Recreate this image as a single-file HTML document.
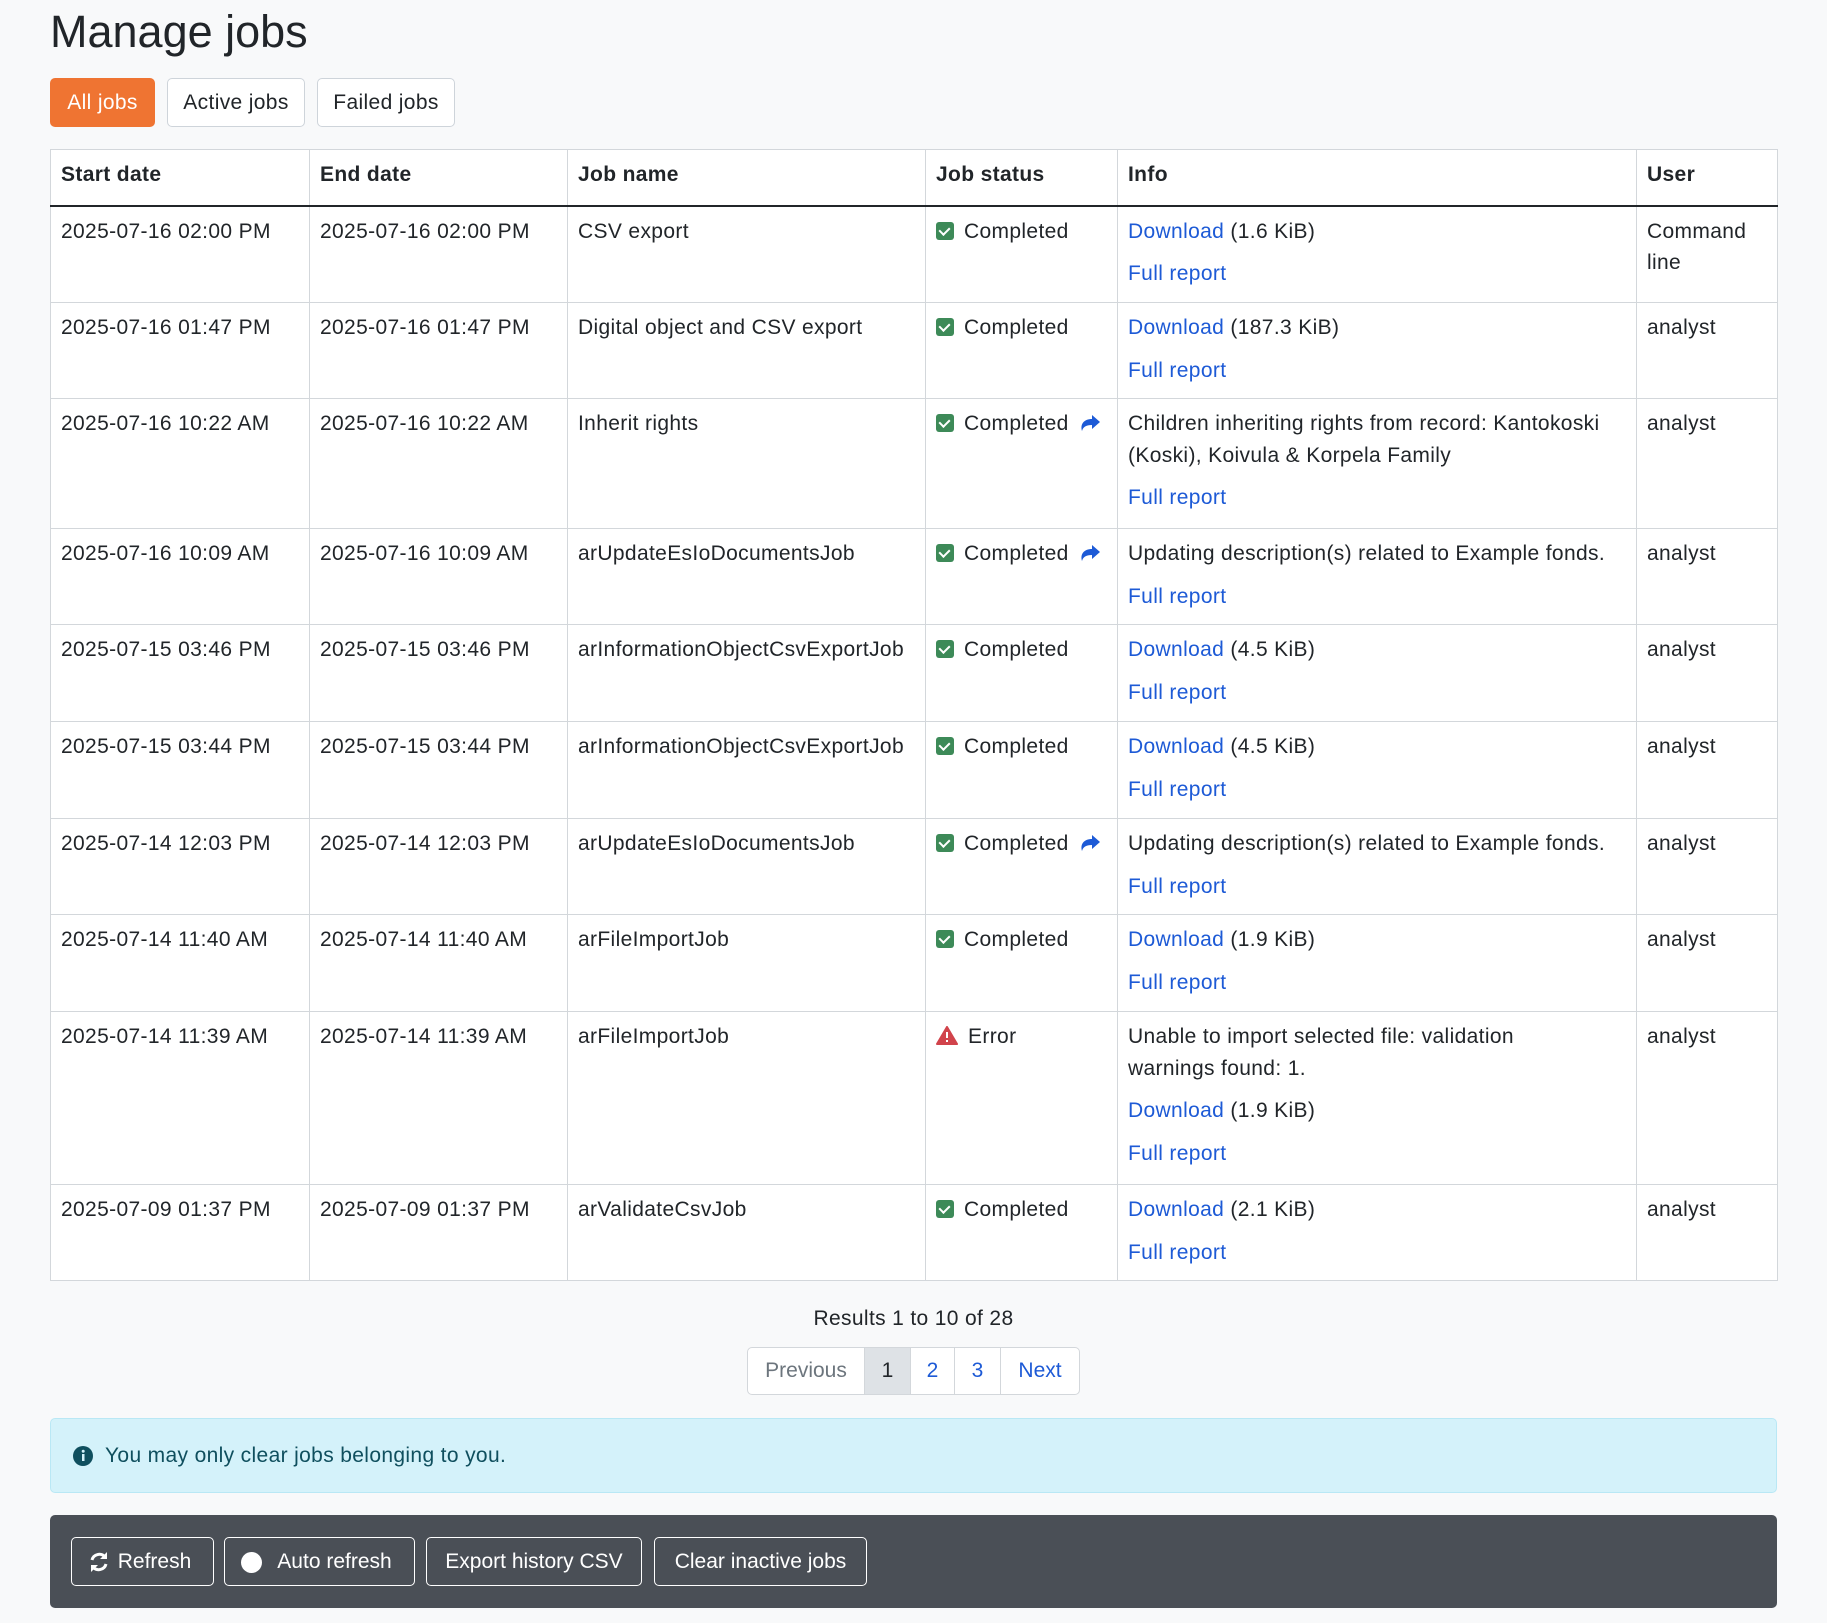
<!DOCTYPE html>
<html><head><meta charset="utf-8"><style>
*{box-sizing:border-box}
body{margin:0;background:#f8f9fa;font-family:"Liberation Sans",sans-serif;color:#212529;font-size:21px;letter-spacing:0.35px;width:1827px;height:1623px;overflow:hidden;position:relative}
h1{position:absolute;left:50px;top:4px;margin:0;font-weight:400;font-size:45px;line-height:56px;letter-spacing:0}
.tab{position:absolute;top:78px;height:49px;border:1px solid #ced4da;border-radius:5px;background:#fff;font-size:21px;line-height:47px;text-align:center}
table{position:absolute;left:50px;top:149px;width:1727px;border-collapse:collapse;background:#fff;table-layout:fixed}
td,th{border:1px solid #d3d7db;vertical-align:top;padding:9px 10px 0 10px;line-height:31.5px;text-align:left}
th{font-weight:700;height:56px;border-bottom:2px solid #212529}
a{color:#1d5ad6;text-decoration:none}
.fr{display:block;margin-top:11px}
.chk{display:inline-block;width:18px;height:18px;background:#3d8a58;border-radius:3px;vertical-align:-2px;margin-right:10px;position:relative}
.chk:after{content:"";position:absolute;left:5px;top:3px;width:5px;height:8px;border:solid #fff;border-width:0 2px 2px 0;transform:rotate(45deg)}
.arr{margin-left:10px;vertical-align:-2px}
.pg{position:absolute;top:1347px;height:48px;border:1px solid #d3d7db;background:#fff;line-height:46px;text-align:center;font-size:21px;color:#1d5ad6;letter-spacing:0}
.bb{position:absolute;top:1537px;height:49px;border:1px solid #fff;border-radius:5px;color:#fff;line-height:47px;text-align:center;font-size:21px;letter-spacing:0}
</style></head><body>
<h1>Manage jobs</h1>
<div class="tab" style="left:50px;width:105px;background:#ef7432;border-color:#ef7432;color:#fff">All jobs</div>
<div class="tab" style="left:167px;width:138px">Active jobs</div>
<div class="tab" style="left:317px;width:138px">Failed jobs</div>
<table>
<colgroup><col style="width:259px"><col style="width:258px"><col style="width:358px"><col style="width:192px"><col style="width:519px"><col style="width:141px"></colgroup>
<tr><th>Start date</th><th>End date</th><th>Job name</th><th>Job status</th><th>Info</th><th>User</th></tr>
<tr style="height:97px"><td>2025-07-16 02:00 PM</td><td>2025-07-16 02:00 PM</td><td>CSV export</td><td><span class="chk"></span>Completed</td><td><a>Download</a> (1.6 KiB)<a class="fr">Full report</a></td><td>Command line</td></tr>
<tr style="height:96px"><td>2025-07-16 01:47 PM</td><td>2025-07-16 01:47 PM</td><td>Digital object and CSV export</td><td><span class="chk"></span>Completed</td><td><a>Download</a> (187.3 KiB)<a class="fr">Full report</a></td><td>analyst</td></tr>
<tr style="height:130px"><td>2025-07-16 10:22 AM</td><td>2025-07-16 10:22 AM</td><td>Inherit rights</td><td><span class="chk"></span>Completed<svg class="arr" width="22" height="18" viewBox="0 0 22 18"><path d="M13 1 L21 8 L13 15 V11 C7 11 4 13 3 17 C1 10 5 5 13 5 Z" fill="#1d5ad6"/></svg></td><td>Children inheriting rights from record: Kantokoski (Koski), Koivula &amp; Korpela Family<a class="fr">Full report</a></td><td>analyst</td></tr>
<tr style="height:96px"><td>2025-07-16 10:09 AM</td><td>2025-07-16 10:09 AM</td><td>arUpdateEsIoDocumentsJob</td><td><span class="chk"></span>Completed<svg class="arr" width="22" height="18" viewBox="0 0 22 18"><path d="M13 1 L21 8 L13 15 V11 C7 11 4 13 3 17 C1 10 5 5 13 5 Z" fill="#1d5ad6"/></svg></td><td>Updating description(s) related to Example fonds.<a class="fr">Full report</a></td><td>analyst</td></tr>
<tr style="height:97px"><td>2025-07-15 03:46 PM</td><td>2025-07-15 03:46 PM</td><td>arInformationObjectCsvExportJob</td><td><span class="chk"></span>Completed</td><td><a>Download</a> (4.5 KiB)<a class="fr">Full report</a></td><td>analyst</td></tr>
<tr style="height:97px"><td>2025-07-15 03:44 PM</td><td>2025-07-15 03:44 PM</td><td>arInformationObjectCsvExportJob</td><td><span class="chk"></span>Completed</td><td><a>Download</a> (4.5 KiB)<a class="fr">Full report</a></td><td>analyst</td></tr>
<tr style="height:96px"><td>2025-07-14 12:03 PM</td><td>2025-07-14 12:03 PM</td><td>arUpdateEsIoDocumentsJob</td><td><span class="chk"></span>Completed<svg class="arr" width="22" height="18" viewBox="0 0 22 18"><path d="M13 1 L21 8 L13 15 V11 C7 11 4 13 3 17 C1 10 5 5 13 5 Z" fill="#1d5ad6"/></svg></td><td>Updating description(s) related to Example fonds.<a class="fr">Full report</a></td><td>analyst</td></tr>
<tr style="height:97px"><td>2025-07-14 11:40 AM</td><td>2025-07-14 11:40 AM</td><td>arFileImportJob</td><td><span class="chk"></span>Completed</td><td><a>Download</a> (1.9 KiB)<a class="fr">Full report</a></td><td>analyst</td></tr>
<tr style="height:173px"><td>2025-07-14 11:39 AM</td><td>2025-07-14 11:39 AM</td><td>arFileImportJob</td><td><svg width="22" height="19" viewBox="0 0 22 19" style="vertical-align:-2px;margin-right:10px"><path d="M11 1 L21 18 H1 Z" fill="#d1434b" stroke="#d1434b" stroke-linejoin="round" stroke-width="2"/><rect x="10" y="6" width="2" height="6" fill="#fff"/><rect x="10" y="14" width="2" height="2" fill="#fff"/></svg>Error</td><td>Unable to import selected file: validation<br>warnings found: 1.<span class="fr"><a>Download</a> (1.9 KiB)</span><a class="fr">Full report</a></td><td>analyst</td></tr>
<tr style="height:96px"><td>2025-07-09 01:37 PM</td><td>2025-07-09 01:37 PM</td><td>arValidateCsvJob</td><td><span class="chk"></span>Completed</td><td><a>Download</a> (2.1 KiB)<a class="fr">Full report</a></td><td>analyst</td></tr>
</table>
<div style="position:absolute;top:1303px;left:0;width:1827px;text-align:center;line-height:32px">Results 1 to 10 of 28</div>
<div class="pg" style="left:747px;width:118px;color:#6c757d;border-radius:5px 0 0 5px">Previous</div>
<div class="pg" style="left:864px;width:47px;background:#dee2e6;color:#212529">1</div>
<div class="pg" style="left:910px;width:45px">2</div>
<div class="pg" style="left:954px;width:47px">3</div>
<div class="pg" style="left:1000px;width:80px;border-radius:0 5px 5px 0">Next</div>
<div style="position:absolute;left:50px;top:1418px;width:1727px;height:75px;background:#d4f2fa;border:1px solid #b9e8f5;border-radius:5px;color:#0f4f5e;line-height:73px;padding-left:54px">
<svg width="20" height="20" viewBox="0 0 20 20" style="position:absolute;left:22px;top:27px"><circle cx="10" cy="10" r="10" fill="#0f4f5e"/><rect x="9" y="8" width="2.5" height="7" fill="#d4f2fa"/><circle cx="10.2" cy="5.3" r="1.5" fill="#d4f2fa"/></svg>You may only clear jobs belonging to you.</div>
<div style="position:absolute;left:50px;top:1515px;width:1727px;height:93px;background:#4a4f56;border-radius:5px"></div>
<div class="bb" style="left:71px;width:143px;padding-left:24px"><svg width="22" height="22" viewBox="0 0 22 22" style="position:absolute;left:16px;top:13px"><path d="M4 9 A7.5 7.5 0 0 1 17 6 M18 13 A7.5 7.5 0 0 1 5 16" fill="none" stroke="#fff" stroke-width="3"/><path d="M19 1 V8 H12 Z M3 21 V14 H10 Z" fill="#fff"/></svg>Refresh</div>
<div class="bb" style="left:224px;width:191px;padding-left:30px"><span style="position:absolute;left:16px;top:14px;width:21px;height:21px;border-radius:50%;background:#fff"></span>Auto refresh</div>
<div class="bb" style="left:426px;width:216px">Export history CSV</div>
<div class="bb" style="left:654px;width:213px">Clear inactive jobs</div>
</body></html>
